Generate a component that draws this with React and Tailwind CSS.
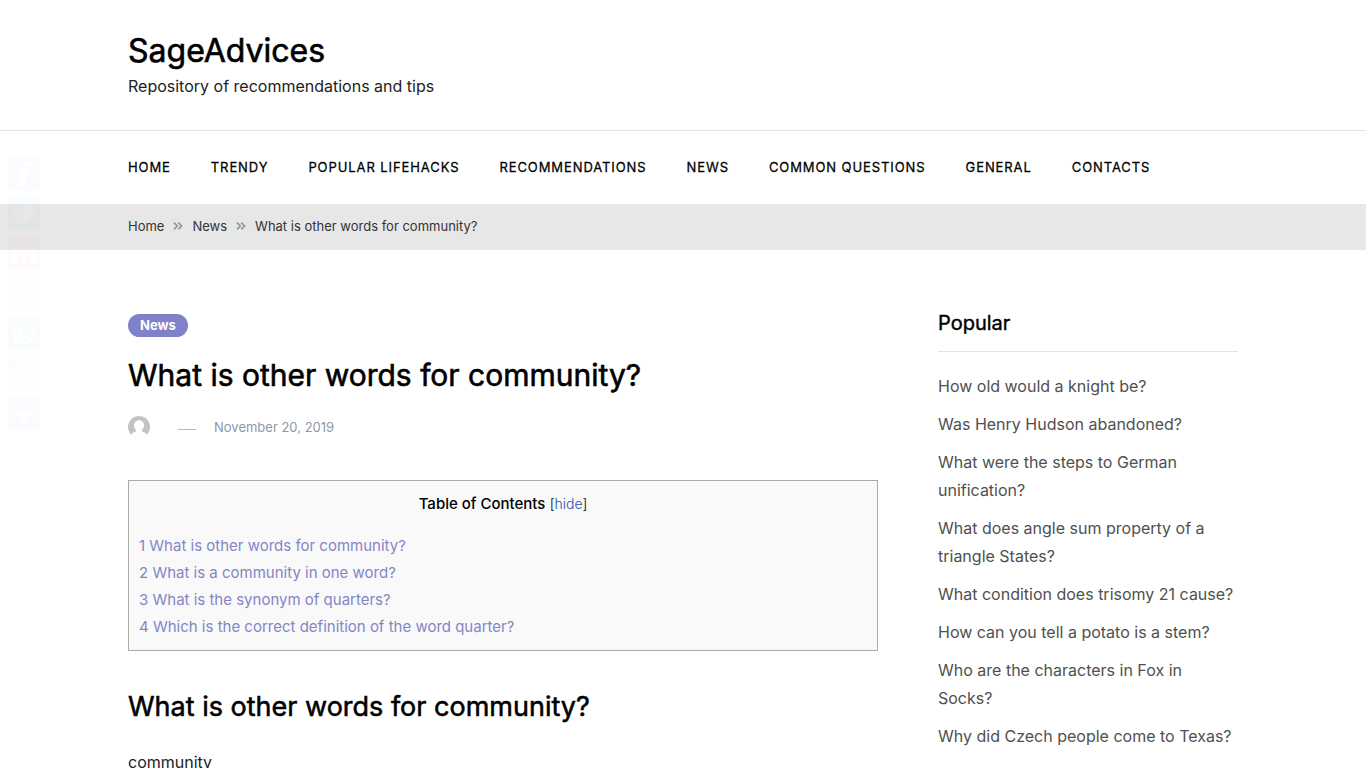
import { FaFacebookF, FaTwitter, FaWhatsapp, FaTelegramPlane, FaPlus } from 'react-icons/fa';
import { SiGmail } from 'react-icons/si';
import { IoMdPrint } from 'react-icons/io';

const NAV_LINKS = ['Home', 'Trendy', 'Popular Lifehacks', 'Recommendations', 'News', 'Common Questions', 'General', 'Contacts'];

const TOC = [
  'What is other words for community?',
  'What is a community in one word?',
  'What is the synonym of quarters?',
  'Which is the correct definition of the word quarter?',
];

const POPULAR = [
  'How old would a knight be?',
  'Was Henry Hudson abandoned?',
  'What were the steps to German unification?',
  'What does angle sum property of a triangle States?',
  'What condition does trisomy 21 cause?',
  'How can you tell a potato is a stem?',
  'Who are the characters in Fox in Socks?',
  'Why did Czech people come to Texas?',
];

const SHARE = [
  { name: 'Facebook', icon: FaFacebookF, color: 'bg-[#0778f2]' },
  { name: 'Twitter', icon: FaTwitter, color: 'bg-[#1d9bf0]' },
  { name: 'Gmail', icon: SiGmail, color: 'bg-[#ea4335]' },
  { name: 'Print', icon: IoMdPrint, color: 'bg-[#888990]' },
  { name: 'WhatsApp', icon: FaWhatsapp, color: 'bg-[#12af0a]' },
  { name: 'Telegram', icon: FaTelegramPlane, color: 'bg-[#2ca5e0]' },
  { name: 'Share', icon: FaPlus, color: 'bg-[#0166ff]' },
];

function ShareBar() {
  return (
    <div className="fixed top-[158px] left-2 flex flex-col gap-2 opacity-[0.02]">
      {SHARE.map(({ name, icon: Icon, color }) => (
        <a key={name} href="#" aria-label={name} className={`flex h-8 w-8 items-center justify-center rounded text-white ${color}`}>
          <Icon className="h-6 w-6" />
        </a>
      ))}
    </div>
  );
}

function Header() {
  return (
    <header>
      <div className="border-b border-[#e3e3e3]">
        <div className="mx-auto max-w-[1110px] pt-7 pb-8">
          <a href="#" className="block text-[32px] leading-[46px] [-webkit-text-stroke:0.02em]">SageAdvices</a>
          <p className="text-base leading-6 text-[#222]">Repository of recommendations and tips</p>
        </div>
      </div>
      <nav className="mx-auto max-w-[1110px]">
        <ul className="flex flex-wrap gap-x-10 py-6">
          {NAV_LINKS.map((label) => (
            <li key={label}>
              <a href="#" className="block text-[13px] leading-[25px] tracking-[0.07em] uppercase [-webkit-text-stroke:0.02em]">{label}</a>
            </li>
          ))}
        </ul>
      </nav>
    </header>
  );
}

function Separator() {
  return (
    <svg viewBox="0 0 10 8" className="h-2 w-[10px] fill-none stroke-[#8d98a6] stroke-[1.7]" aria-hidden="true">
      <path d="M1 0.7 4.3 4 1 7.3M5.3 0.7 8.6 4 5.3 7.3" />
    </svg>
  );
}

function Breadcrumbs() {
  return (
    <div className="bg-[#e7e7e7]">
      <div className="mx-auto flex max-w-[1110px] items-center gap-[9px] pt-[11px] pb-[13px] text-[13px] leading-[22px] text-[#333]">
        <a href="#">Home</a>
        <Separator />
        <a href="#">News</a>
        <Separator />
        <span>What is other words for community?</span>
      </div>
    </div>
  );
}

function Avatar() {
  return (
    <svg viewBox="0 0 22 22" className="h-[22px] w-[22px]" aria-hidden="true">
      <clipPath id="avatar-clip">
        <circle cx="11" cy="11" r="11" />
      </clipPath>
      <g clipPath="url(#avatar-clip)">
        <rect width="22" height="22" fill="#c3c3c3" />
        <path fill="#fff" d="M11 4.2c3 0 5 2.300 5 5.100 0 1.900-.8 3.600-2 4.600v1.300c.8.900 3 1.200 4.200 2.300V22H3.800v-4.500C5 16.400 7.200 16.100 8 15.200v-1.300c-1.200-1-2-2.700-2-4.600 0-2.800 2-5.100 5-5.100z" />
        <path fill="#fff" d="M0 19h22v3H0z" />
      </g>
    </svg>
  );
}

function Article() {
  return (
    <article className="min-w-0 flex-1">
      <a href="#" className="inline-block rounded-full bg-[#7f82c8] px-3 align-top text-[13px] leading-[23px] font-bold text-white">News</a>
      <h1 className="mt-4 text-[30px] leading-[43px] [-webkit-text-stroke:0.02em]">What is other words for community?</h1>
      <div className="mt-[18px] flex items-center text-[13px] leading-6 text-[#8f98a8]">
        <Avatar />
        <span className="mt-1 mr-[18px] ml-7 h-px w-[18px] bg-[#b4b8bf]" />
        <time dateTime="2019-11-20">November 20, 2019</time>
      </div>

      <div className="mt-[41px] border border-[#aaa] bg-[#f9f9f9] px-[10px] pt-[9px] pb-[10px]">
        <p className="text-center text-[15px] leading-[27px]">
          <span className="font-medium">Table of Contents</span>{' '}
          <span className="text-[14px] font-light">[<a href="#" className="text-[#2450b0]">hide</a>]</span>
        </p>
        <ul className="mt-[15px] text-[15px] leading-[27px] text-[#8386c6]">
          {TOC.map((title, i) => (
            <li key={title}>
              <a href="#">{i + 1} {title}</a>
            </li>
          ))}
        </ul>
      </div>

      <h2 className="mt-9 text-[27px] leading-10 [-webkit-text-stroke:0.02em]">What is other words for community?</h2>
      <p className="mt-[21px] text-base leading-7 text-[#222]">community</p>
    </article>
  );
}

function Sidebar() {
  return (
    <aside className="w-[300px] shrink-0">
      <h2 className="border-b border-[#e3e3e3] pb-[18px] text-xl leading-[19px] [-webkit-text-stroke:0.02em]">Popular</h2>
      <ul className="mt-5 flex flex-col gap-[10px]">
        {POPULAR.map((title) => (
          <li key={title} className="text-base leading-7">
            <a href="#" className="text-[#505050]">{title}</a>
          </li>
        ))}
      </ul>
    </aside>
  );
}

export default function App() {
  return (
    <div className="h-screen overflow-hidden bg-white font-['Inter',sans-serif] text-black">
      <Header />
      <Breadcrumbs />
      <main className="mx-auto flex max-w-[1110px] gap-[60px] pt-16">
        <Article />
        <Sidebar />
      </main>
      <ShareBar />
    </div>
  );
}
